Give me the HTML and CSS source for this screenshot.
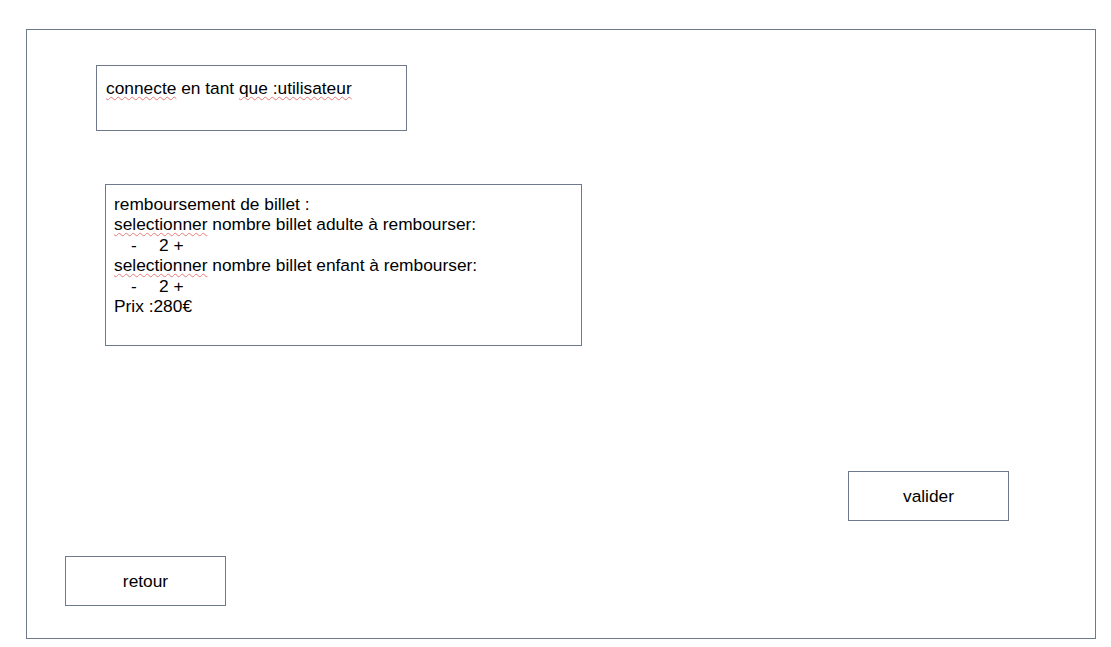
FILE: index.html
```html
<!DOCTYPE html>
<html lang="fr">
<head>
<meta charset="utf-8">
<title>Remboursement</title>
<link rel="stylesheet" href="styles.css">
</head>
<body>
<div class="frame">
  <div class="user-box">
    <span class="sp">connecte</span> en tant <span class="sp">que :utilisateur</span>
  </div>
  <div class="refund-box">
    <div class="line">remboursement de billet :</div>
    <div class="line"><span class="sp">selectionner</span> nombre billet adulte à rembourser:</div>
    <div class="line counter"><span class="minus">-</span><span class="num">2 +</span></div>
    <div class="line"><span class="sp">selectionner</span> nombre billet enfant à rembourser:</div>
    <div class="line counter"><span class="minus">-</span><span class="num">2 +</span></div>
    <div class="line">Prix :280€</div>
  </div>
  <div class="btn btn-valider">valider</div>
  <div class="btn btn-retour">retour</div>
</div>
</body>
</html>
```
FILE: styles.css
```css
* { box-sizing: border-box; }
html, body { margin: 0; padding: 0; background: #ffffff; }
body {
  font-family: "Liberation Sans", Arial, sans-serif;
  font-size: 17.33px;
  color: #000;
}
.frame {
  margin: 29px 0 0 26px;
  width: 1070px;
  height: 610px;
  border: 1px solid #6e7a8c;
  display: flex;
  flex-direction: column;
  align-items: flex-start;
}
.user-box {
  margin: 35px 0 0 69px;
  width: 311px;
  height: 66px;
  border: 1px solid #6e7a8c;
  padding: 12px 9px 0;
  line-height: 20px;
}
.sp {
  text-decoration: underline wavy #e87878;
  text-decoration-thickness: 1px;
  text-underline-offset: 2px;
  text-decoration-skip-ink: none;
}
.refund-box {
  margin: 53px 0 0 78px;
  width: 477px;
  height: 162px;
  border: 1px solid #6e7a8c;
  padding: 9px 8px 0;
  line-height: 20.4px;
}
.counter { display: flex; padding-left: 17px; }
.minus { width: 28px; }
.btn {
  width: 161px;
  height: 50px;
  border: 1px solid #6e7a8c;
  display: flex;
  align-items: center;
  justify-content: center;
}
.btn-valider { margin: 125px 0 0 821px; }
.btn-retour { margin: 35px 0 0 38px; }
```
